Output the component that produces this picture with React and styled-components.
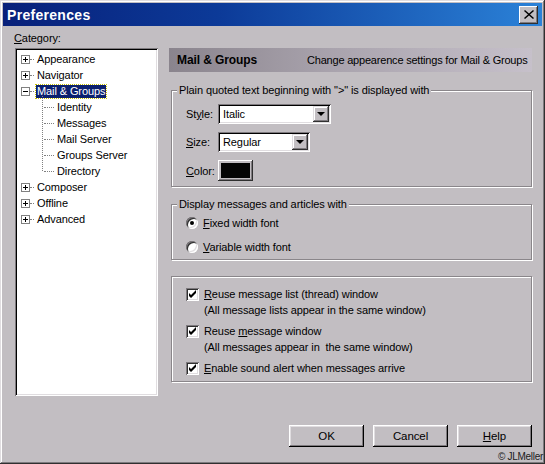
import styled, { createGlobalStyle } from "styled-components";

const GlobalStyle = createGlobalStyle`
  html, body {
    margin: 0;
    padding: 0;
    background: #c2bec2;
  }
  * {
    box-sizing: border-box;
  }
`;

const face = "#c2bec2";

const Window = styled.div`
  position: relative;
  width: 545px;
  height: 464px;
  padding: 3px;
  background: ${face};
  font-family: "Liberation Sans", Arial, sans-serif;
  font-size: 11px;
  letter-spacing: -0.1px;
  color: #000;
  box-shadow: inset -1px -1px #303030, inset 1px 1px #e0dde0,
    inset -2px -2px #7e7a7e, inset 2px 2px #fff;
  display: flex;
  flex-direction: column;
`;

const TitleBar = styled.div`
  height: 23px;
  display: flex;
  align-items: center;
  justify-content: space-between;
  padding: 0 4px 0 4px;
  background: linear-gradient(to right, #08207a 0%, #0c3a98 40%, #2b82d8 100%);
`;

const Title = styled.span`
  color: #fff;
  font-weight: bold;
  font-size: 14px;
  letter-spacing: 0.3px;
`;

const CloseButton = styled.div`
  width: 19px;
  height: 18px;
  background: ${face};
  box-shadow: inset -1px -1px #303030, inset 1px 1px #fff,
    inset -2px -2px #7e7a7e;
  display: flex;
  align-items: center;
  justify-content: center;
`;

const Body = styled.div`
  flex: 1;
  display: flex;
  gap: 11px;
  padding: 5px 8px 0 12px;
`;

const LeftColumn = styled.div`
  width: 143px;
  display: flex;
  flex-direction: column;
`;

const CategoryLabel = styled.div`
  height: 17px;
  margin-left: -1px;
  line-height: 14px;
`;

const TreeBox = styled.div`
  height: 348px;
  background: #fff;
  padding: 3px 2px;
  box-shadow: inset 1px 1px #7e7a7e, inset -1px -1px #fff,
    inset 2px 2px #000, inset -2px -2px #e0dde0;
`;

const TreeRow = styled.div`
  height: 16px;
  display: flex;
  align-items: center;
  padding-left: ${(p) => (p.$child ? 27 : 4)}px;
  position: relative;
`;

const Expander = styled.span`
  width: 9px;
  height: 9px;
  border: 1px solid #808080;
  background: #fff;
  position: relative;
  flex: none;
  &::before {
    content: "";
    position: absolute;
    left: 1px;
    top: 3px;
    width: 5px;
    height: 1px;
    background: #000;
  }
  &::after {
    content: "";
    position: absolute;
    left: 3px;
    top: 1px;
    width: 1px;
    height: 5px;
    background: #000;
    display: ${(p) => (p.$open ? "none" : "block")};
  }
`;

const DotLine = styled.span`
  width: ${(p) => p.$w}px;
  border-top: 1px dotted #808080;
  flex: none;
  margin-right: 2px;
`;

const TreeText = styled.span`
  padding: 0 1px;
  line-height: 13px;
  background: ${(p) => (p.$selected ? "#0a1f6e" : "transparent")};
  color: ${(p) => (p.$selected ? "#fff" : "#000")};
  outline: ${(p) => (p.$selected ? "1px dotted #c8c000" : "none")};
`;

const ChildLines = styled.div`
  position: relative;
  &::before {
    content: "";
    position: absolute;
    left: 25px;
    top: -3px;
    height: 75px;
    border-left: 1px dotted #808080;
  }
`;

const RightColumn = styled.div`
  width: 363px;
  padding-top: 17px;
  display: flex;
  flex-direction: column;
`;

const Header = styled.div`
  height: 24px;
  display: flex;
  align-items: center;
  padding: 0 6px 0 8px;
  white-space: nowrap;
  background: linear-gradient(to right, #8a848d 0%, #a9a3ad 45%, #c6c0ca 100%);
`;

const HeaderTitle = styled.span`
  font-weight: bold;
  font-size: 12px;
  width: 130px;
  flex: none;
`;

const HeaderDesc = styled.span`
  font-size: 11px;
  letter-spacing: -0.2px;
`;

const Group = styled.fieldset`
  margin: ${(p) => p.$top}px 0 0 2px;
  padding: 0;
  border: 1px solid #8a868a;
  box-shadow: inset 1px 1px #fff, 1px 1px #fff;
  min-width: 0;
`;

const Legend = styled.legend`
  margin-left: 5px;
  padding: 0 2px;
  line-height: 13px;
  background: ${face};
`;

const FormGrid = styled.div`
  display: grid;
  grid-template-columns: 32px auto;
  row-gap: 8px;
  align-items: center;
  justify-items: start;
  padding: 7px 0 5px 14px;
`;

const Select = styled.div`
  width: ${(p) => p.$w}px;
  height: 20px;
  background: #fff;
  display: flex;
  align-items: center;
  justify-content: space-between;
  padding: 2px 2px 2px 5px;
  box-shadow: inset 1px 1px #7e7a7e, inset -1px -1px #fff,
    inset 2px 2px #000, inset -2px -2px #e0dde0;
`;

const DropButton = styled.div`
  width: 16px;
  height: 16px;
  background: ${face};
  box-shadow: inset -1px -1px #303030, inset 1px 1px #e0dde0,
    inset -2px -2px #7e7a7e, inset 2px 2px #fff;
  display: flex;
  align-items: center;
  justify-content: center;
  &::after {
    content: "";
    border-left: 4px solid transparent;
    border-right: 4px solid transparent;
    border-top: 4px solid #000;
  }
`;

const ColorButton = styled.div`
  width: 35px;
  height: 21px;
  padding: 3px;
  background: ${face};
  box-shadow: inset -1px -1px #303030, inset 1px 1px #fff,
    inset -2px -2px #7e7a7e;
  &::after {
    content: "";
    display: block;
    width: 100%;
    height: 100%;
    background: #050505;
  }
`;

const OptionList = styled.div`
  display: flex;
  flex-direction: column;
  gap: ${(p) => p.$gap}px;
  padding: ${(p) => p.$pad};
`;

const OptionRow = styled.label`
  display: flex;
  align-items: flex-start;
  gap: 5px;
  line-height: 16px;
`;

const Radio = styled.span`
  width: 12px;
  height: 12px;
  margin-top: 2px;
  border-radius: 50%;
  background: #fff;
  flex: none;
  display: flex;
  align-items: center;
  justify-content: center;
  box-shadow: inset 1px 1px #7e7a7e, inset -1px -1px #fff,
    inset 2px 2px #303030, inset -2px -2px #e0dde0;
  &::after {
    content: "";
    width: 4px;
    height: 4px;
    border-radius: 50%;
    background: #000;
    display: ${(p) => (p.$checked ? "block" : "none")};
  }
`;

const Check = styled.span`
  width: 13px;
  height: 13px;
  margin-top: 2px;
  background: #fff;
  flex: none;
  display: flex;
  align-items: center;
  justify-content: center;
  box-shadow: inset 1px 1px #7e7a7e, inset -1px -1px #fff,
    inset 2px 2px #303030, inset -2px -2px #e0dde0;
`;

const U = styled.span`
  text-decoration: underline;
`;

const ButtonRow = styled.div`
  margin-top: auto;
  margin-bottom: 14px;
  display: flex;
  justify-content: flex-end;
  gap: 9px;
`;

const Button = styled.div`
  width: 75px;
  height: 22px;
  background: ${face};
  font-size: 11.5px;
  display: flex;
  align-items: center;
  justify-content: center;
  box-shadow: inset -1px -1px #000, inset 1px 1px #fff,
    inset -2px -2px #7e7a7e, inset 2px 2px #e0dde0;
`;

const Credit = styled.div`
  position: absolute;
  right: 2px;
  bottom: 2px;
  font-size: 10px;
  line-height: 10px;
  letter-spacing: -0.3px;
  color: #202020;
`;

const tree = [
  { label: "Appearance" },
  { label: "Navigator" },
  {
    label: "Mail & Groups",
    open: true,
    children: ["Identity", "Messages", "Mail Server", "Groups Server", "Directory"],
  },
  { label: "Composer" },
  { label: "Offline" },
  { label: "Advanced" },
];

function CheckMark() {
  return (
    <svg width="9" height="9" viewBox="0 0 9 9">
      <path d="M1 3 L3 5 L8 0 L8 3 L3 8 L1 6 Z" fill="#000" />
    </svg>
  );
}

export default function App() {
  return (
    <>
      <GlobalStyle />
      <Window>
        <TitleBar>
          <Title>Preferences</Title>
          <CloseButton>
            <svg width="10" height="9" viewBox="0 0 10 9">
              <path d="M1 0 L5 3.6 L9 0 L10 1 L6 4.5 L10 8 L9 9 L5 5.4 L1 9 L0 8 L4 4.5 L0 1 Z" fill="#000" />
            </svg>
          </CloseButton>
        </TitleBar>
        <Body>
          <LeftColumn>
            <CategoryLabel>
              <U>C</U>ategory:
            </CategoryLabel>
            <TreeBox>
              {tree.map((node) => (
                <div key={node.label}>
                  <TreeRow>
                    <Expander $open={node.open} />
                    <DotLine $w={4} />
                    <TreeText $selected={node.open}>{node.label}</TreeText>
                  </TreeRow>
                  {node.children && (
                    <ChildLines>
                      {node.children.map((c) => (
                        <TreeRow key={c} $child>
                          <DotLine $w={10} />
                          <TreeText>{c}</TreeText>
                        </TreeRow>
                      ))}
                    </ChildLines>
                  )}
                </div>
              ))}
            </TreeBox>
          </LeftColumn>
          <RightColumn>
            <Header>
              <HeaderTitle>Mail &amp; Groups</HeaderTitle>
              <HeaderDesc>Change appearence settings for Mail &amp; Groups</HeaderDesc>
            </Header>
            <Group $top={12}>
              <Legend>Plain quoted text beginning with "&gt;" is displayed with</Legend>
              <FormGrid>
                <span>
                  St<U>y</U>le:
                </span>
                <Select $w={113}>
                  <span>Italic</span>
                  <DropButton />
                </Select>
                <span>
                  <U>S</U>ize:
                </span>
                <Select $w={92}>
                  <span>Regular</span>
                  <DropButton />
                </Select>
                <span>
                  <U>C</U>olor:
                </span>
                <ColorButton />
              </FormGrid>
            </Group>
            <Group $top={11}>
              <Legend>Display messages and articles with</Legend>
              <OptionList $gap={8} $pad="4px 0 4px 14px">
                <OptionRow>
                  <Radio $checked />
                  <span>
                    <U>F</U>ixed width font
                  </span>
                </OptionRow>
                <OptionRow>
                  <Radio />
                  <span>
                    <U>V</U>ariable width font
                  </span>
                </OptionRow>
              </OptionList>
            </Group>
            <Group $top={16}>
              <OptionList $gap={5} $pad="9px 0 5px 14px">
                <OptionRow>
                  <Check>
                    <CheckMark />
                  </Check>
                  <span>
                    <U>R</U>euse message list (thread) window
                    <br />
                    (All message lists appear in the same window)
                  </span>
                </OptionRow>
                <OptionRow>
                  <Check>
                    <CheckMark />
                  </Check>
                  <span>
                    Reuse <U>m</U>essage window
                    <br />
                    (All messages appear in&nbsp; the same window)
                  </span>
                </OptionRow>
                <OptionRow>
                  <Check>
                    <CheckMark />
                  </Check>
                  <span>
                    <U>E</U>nable sound alert when messages arrive
                  </span>
                </OptionRow>
              </OptionList>
            </Group>
            <ButtonRow>
              <Button>OK</Button>
              <Button>Cancel</Button>
              <Button>
                <span>
                  <U>H</U>elp
                </span>
              </Button>
            </ButtonRow>
          </RightColumn>
        </Body>
        <Credit>© JLMeller</Credit>
      </Window>
    </>
  );
}
